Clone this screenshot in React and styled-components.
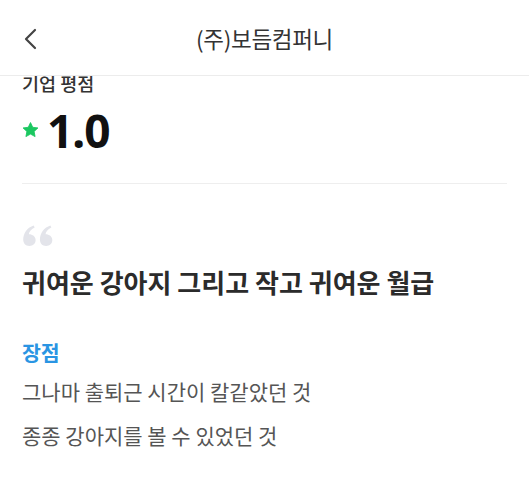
import * as React from 'react';
import styled, { createGlobalStyle } from 'styled-components';

const GlobalStyle = createGlobalStyle`
  html, body {
    margin: 0;
    padding: 0;
    background: #fff;
  }
  body {
    font-family: 'Noto Sans CJK KR', 'Noto Sans', sans-serif;
    color: #333;
  }
`;

const Root = styled.div`
  width: 529px;
  height: 479px;
  overflow: hidden;
  position: relative;
  background: #fff;
`;

const Header = styled.header`
  position: absolute;
  top: 0;
  left: 0;
  right: 0;
  height: 75px;
  z-index: 2;
  background: #fff;
  border-bottom: 1px solid #ececec;
  display: flex;
  align-items: center;
  justify-content: center;
`;

const BackButton = styled.button`
  position: absolute;
  left: 16px;
  top: 24px;
  width: 28px;
  height: 30px;
  padding: 0;
  border: none;
  background: none;
  display: flex;
  align-items: center;
  justify-content: center;
`;

const Title = styled.h1`
  margin: 0;
  font-size: 22.5px;
  font-weight: 400;
  color: #333;
  letter-spacing: -0.3px;
`;

const Content = styled.main`
  padding: 70px 22px 0 22px;
`;

const Label = styled.div`
  font-size: 18.5px;
  font-weight: 500;
  color: #333;
  line-height: 26px;
`;

const Rating = styled.div`
  display: flex;
  align-items: center;
  gap: 8px;
  margin-top: 8px;
  padding-bottom: 27px;
  border-bottom: 1px solid #eeeeee;
`;

const Score = styled.span`
  font-family: 'Noto Sans', sans-serif;
  font-size: 46px;
  font-weight: 700;
  color: #111;
  line-height: 52px;
  letter-spacing: -1px;
`;

const Review = styled.section`
  padding-top: 41px;

  & > svg {
    display: block;
  }
`;

const Headline = styled.h2`
  margin: 17px 0 0 0;
  font-size: 26px;
  font-weight: 700;
  color: #2b2b2b;
  line-height: 38px;
`;

const SectionTitle = styled.h3`
  margin: 37px 0 0 0;
  font-size: 20.5px;
  font-weight: 700;
  color: ${({ tone }) => tone};
  line-height: 28px;
`;

const Line = styled.p`
  margin: ${({ first }) => (first ? '9px' : '12px')} 0 0 0;
  font-size: 21px;
  font-weight: 400;
  color: #555;
  line-height: 32px;
`;

const Chevron = () => (
  <svg width="14" height="22" viewBox="0 0 14 22">
    <path d="M12 2 L3 11 L12 20" fill="none" stroke="#444" strokeWidth="2.2" strokeLinecap="round" strokeLinejoin="round" />
  </svg>
);

const Star = () => (
  <svg width="17" height="16" viewBox="0 0 24 23">
    <path
      d="M12 0.8 L15.2 7.6 L22.7 8.5 L17.2 13.6 L18.6 21 L12 17.4 L5.4 21 L6.8 13.6 L1.3 8.5 L8.8 7.6 Z"
      fill="#1bc760"
      stroke="#1bc760"
      strokeWidth="1.2"
      strokeLinejoin="round"
    />
  </svg>
);

const Quote = () => (
  <svg width="32" height="21" viewBox="0 0 32 22">
    <g fill="#e3e4ea">
      <path d="M7 22 C3 22 0.5 19.3 0.5 15.3 C0.5 8.5 5 2.5 11.5 0.5 L12.5 2.5 C8.6 4.4 6.6 7.2 6.4 9.8 C10.4 9.8 13.5 12.2 13.5 15.8 C13.5 19.4 10.8 22 7 22 Z" />
      <path d="M24.5 22 C20.5 22 18 19.3 18 15.3 C18 8.5 22.5 2.5 29 0.5 L30 2.5 C26.1 4.4 24.1 7.2 23.9 9.8 C27.9 9.8 31 12.2 31 15.8 C31 19.4 28.3 22 24.5 22 Z" />
    </g>
  </svg>
);

const pros = ['그나마 출퇴근 시간이 칼같았던 것', '종종 강아지를 볼 수 있었던 것'];

const App = () => (
  <Root>
    <GlobalStyle />
    <Header>
      <BackButton aria-label="back">
        <Chevron />
      </BackButton>
      <Title>(주)보듬컴퍼니</Title>
    </Header>
    <Content>
      <Label>기업 평점</Label>
      <Rating>
        <Star />
        <Score>1.0</Score>
      </Rating>
      <Review>
        <Quote />
        <Headline>귀여운 강아지 그리고 작고 귀여운 월급</Headline>
        <SectionTitle tone="#2a95e3">장점</SectionTitle>
        {pros.map((p, i) => (
          <Line key={i} first={i === 0}>
            {p}
          </Line>
        ))}
      </Review>
    </Content>
  </Root>
);

export default App;
